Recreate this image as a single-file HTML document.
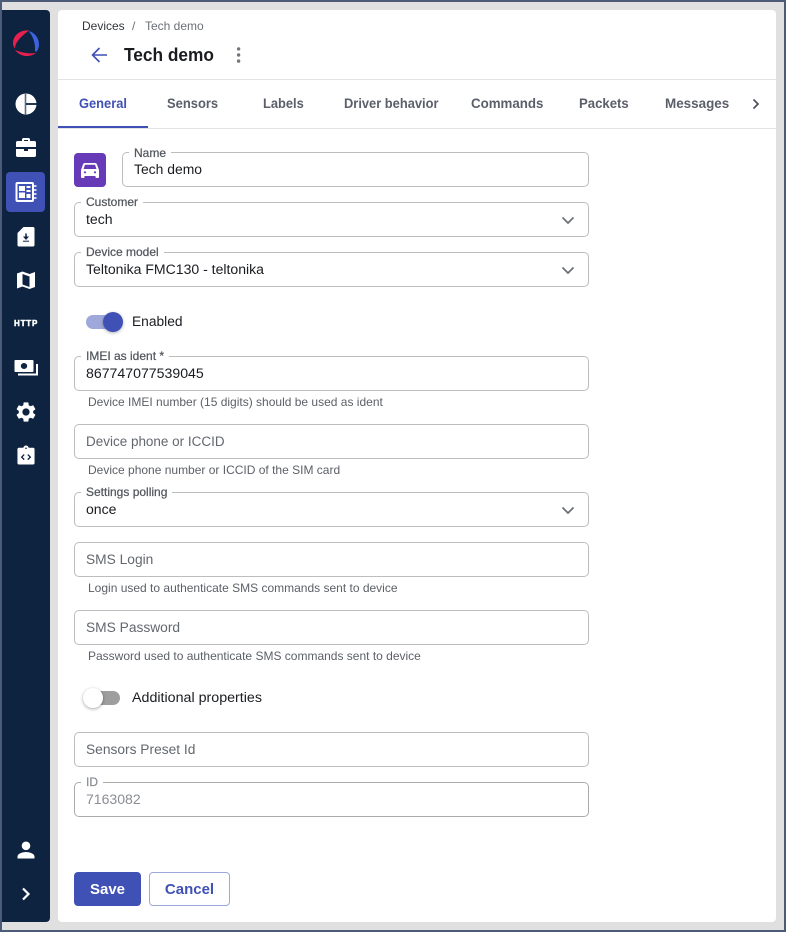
<!DOCTYPE html>
<html><head><meta charset="utf-8"><style>
*{box-sizing:border-box}
html,body{margin:0;padding:0}
body{width:786px;height:932px;position:relative;overflow:hidden;background:#e0e0e0;font-family:"Liberation Sans",sans-serif;color:#1a1c20}
#frame{position:absolute;left:0;top:0;width:786px;height:932px;border:2px solid #4b5b78;z-index:9;pointer-events:none}
#side{position:absolute;left:2px;top:10px;width:48px;height:912px;background:#0e2340;border-radius:0 4px 4px 0}
#main{position:absolute;left:58px;top:10px;width:718px;height:912px;background:#fff;border-radius:4px}
.a{position:absolute;white-space:nowrap}
.f{position:absolute;left:74px;width:515px;height:35px;border:1px solid #bdbdbd;border-radius:5px;background:#fff}
.l{position:absolute;font-size:12px;line-height:14px;color:#54585f;background:#fff;padding:0 5px;left:81px;white-space:nowrap;transform-origin:left;transform:scaleX(1);-webkit-text-stroke:.25px #54585f}
.v{position:absolute;left:86px;font-size:14.2px;line-height:18px;color:#1a1c20;white-space:nowrap;transform-origin:left;transform:scaleX(.99);margin-top:1px}
.p{color:#63676e;transform:scaleX(.97)}
.h{position:absolute;left:88px;font-size:12px;line-height:14px;color:#5c6067;white-space:nowrap}
.t{position:absolute;top:95px;font-size:14px;line-height:16px;font-weight:bold;color:#5b5f69;white-space:nowrap;transform-origin:left}
svg{position:absolute;overflow:visible}
</style></head><body>
<div id="side"></div><div id="main"></div>

<svg style="left:12px;top:29px" width="28" height="28" viewBox="0 0 28 28"><path d="M17 1.500C9 .5 1 6 1 14C1 16 1.500 18 3 19.500C3 14 8 8 17 1.500z" fill="#e8204f"/><path d="M3 21C6 25 11 27.500 16 27C19 26.800 22 25.500 24 24C18 25 10 24 3 21z" fill="#e8204f"/><path d="M16.500 2C22 3 27 9 27 15C27 18 26 21 24.500 22.500C24 23 23 22.500 23 21.500C23.500 14 21 7 16.500 2z" fill="#3d63e0"/></svg>

<svg style="left:15px;top:93px" width="22" height="22" viewBox="0 0 22 22"><circle cx="11" cy="11" r="10.500" fill="#fff"/><path d="M10.500 0v22" stroke="#5d6c84" stroke-width="1.600"/><path d="M11 11h11" stroke="#0e2340" stroke-width="1.800"/></svg>
<svg style="left:15px;top:137px" width="22" height="22" viewBox="0 0 22 22"><path d="M7 4V2.500C7 1.700 7.700 1 8.500 1h5c.8 0 1.500.7 1.500 1.500V4h4.500c.8 0 1.500.7 1.500 1.500V10H1V5.500C1 4.700 1.700 4 2.500 4zM9 4h4V3H9zM1 12h8v2h4v-2h8v6.500c0 .8-.7 1.500-1.500 1.500h-17C1.700 20 1 19.300 1 18.500z" fill="#fff"/></svg>
<div class="a" style="left:6px;top:172px;width:39px;height:40px;background:#3f51b5;border-radius:4px"></div>
<svg style="left:15px;top:182px" width="22" height="20" viewBox="0 0 22 20"><path d="M2.500 1h14.500c.8 0 1 .5 1 1v16c0 .5-.2 1-1 1H2.500c-.8 0-1-.5-1-1V2c0-.5.2-1 1-1z" fill="none" stroke="#fff" stroke-width="2"/><path d="M4 4h6v5H4zM4 10.500h6V16H4zM11.500 4h4v2h-4zM11.500 8h4v2h-4zM11.500 12h4v4h-4z" fill="#fff"/><path d="M19 4h2.500M19 8h2.500M19 12h2.500M19 16h2.500" stroke="#fff" stroke-width="1.500"/></svg>
<svg style="left:17px;top:226px" width="18" height="21" viewBox="0 0 18 21"><path d="M6.500 1h9.500c.9 0 1.500.6 1.500 1.500V19c0 .9-.6 1.500-1.500 1.500H2C1.100 20.500.5 19.900.5 19V7z" fill="#fff"/><path d="M9 7.500v4" stroke="#0e2340" stroke-width="1.500"/><path d="M6 10.500h6L9 14z" fill="#0e2340"/><path d="M6 15.200h6" stroke="#0e2340" stroke-width="1"/></svg>
<svg style="left:16px;top:270px" width="20" height="20" viewBox="0 0 20 20"><path d="M1 3.500 6.500 1.500 13.500 4 19 2v15l-5.500 2-7-2.500L1 18.500zM6.500 4v10.500l7 2.500V6.500z" fill="#fff" fill-rule="evenodd"/></svg>
<div class="a" style="left:14px;top:319px;width:26px;font-size:8px;line-height:10px;font-weight:bold;color:#fff;letter-spacing:.8px;-webkit-text-stroke:.5px #fff">HTTP</div>
<svg style="left:14px;top:359px" width="25" height="18" viewBox="0 0 25 18"><path d="M1.500 1h17c.6 0 1 .4 1 1v10c0 .6-.4 1-1 1h-17c-.6 0-1-.4-1-1V2c0-.6.4-1 1-1z" fill="#fff"/><ellipse cx="10" cy="7" rx="3.200" ry="3" fill="#0e2340"/><path d="M23 5v10.500H4" fill="none" stroke="#fff" stroke-width="2"/></svg>
<svg style="left:14px;top:400px" width="24" height="24" viewBox="0 0 24 24"><path d="M19.140 12.940c.04-.3.060-.61.060-.94 0-.32-.020-.64-.070-.94l2.030-1.580c.18-.14.230-.41.120-.61l-1.920-3.320c-.12-.22-.37-.29-.59-.22l-2.390.96c-.5-.38-1.030-.7-1.620-.94l-.36-2.540c-.04-.24-.24-.41-.48-.41h-3.840c-.24 0-.43.17-.47.41l-.36 2.540c-.59.24-1.130.57-1.620.94l-2.390-.96c-.22-.08-.47 0-.59.22L2.740 8.870c-.12.21-.08.47.120.61l2.030 1.580c-.05.3-.09.63-.09.94s.020.64.070.94l-2.030 1.580c-.18.14-.23.41-.12.61l1.920 3.320c.12.22.37.29.59.22l2.390-.96c.5.38 1.030.7 1.620.94l.36 2.540c.05.24.24.41.48.41h3.840c.24 0 .44-.17.47-.41l.36-2.540c.59-.24 1.130-.56 1.620-.94l2.390.96c.22.08.47 0 .59-.22l1.920-3.320c.12-.22.070-.47-.12-.61l-2.010-1.580zM12 15.600c-1.980 0-3.600-1.620-3.600-3.600s1.620-3.600 3.600-3.600 3.600 1.620 3.600 3.600-1.620 3.600-3.600 3.600z" fill="#fff"/></svg>
<svg style="left:17px;top:445px" width="18" height="20" viewBox="0 0 20 22"><path d="M2 3h5c.4-1.500 1.500-2.500 3-2.500S12.600 1.500 13 3h5c.8 0 1.500.7 1.500 1.500v15.500c0 .8-.7 1.500-1.500 1.500H2c-.8 0-1.500-.7-1.500-1.500V4.500C.5 3.700 1.200 3 2 3z" fill="#fff"/><path d="M8 10.500l-2.800 2.800L8 16.100M12 10.500l2.800 2.800-2.800 2.800" fill="none" stroke="#0e2340" stroke-width="1.500"/><circle cx="10" cy="3.500" r=".9" fill="#0e2340"/></svg>
<svg style="left:17px;top:841px" width="18" height="18" viewBox="0 0 18 18"><circle cx="9" cy="4.800" r="4.300" fill="#fff"/><path d="M.5 17.500v-2c0-3 5.500-4.500 8.500-4.500s8.500 1.500 8.500 4.500v2z" fill="#fff"/></svg>
<svg style="left:20.500px;top:887px" width="11" height="14" viewBox="0 0 11 14"><path d="M2 1.500 7.500 7 2 12.500" fill="none" stroke="#fff" stroke-width="2.200"/></svg>

<div class="a" style="left:82px;top:19px;font-size:12px;line-height:14px;color:#33363c">Devices</div>
<div class="a" style="left:132px;top:19px;font-size:12px;line-height:14px;color:#6c7077">/</div>
<div class="a" style="left:145px;top:19px;font-size:12px;line-height:14px;color:#6c7077">Tech demo</div>
<svg style="left:90px;top:46px" width="18" height="18" viewBox="0 0 18 18"><path d="M17 9H3M9.500 2 2.500 9l7 7" fill="none" stroke="#3f51b5" stroke-width="1.600"/></svg>
<div class="a" style="left:124px;top:44px;font-size:18px;line-height:22px;font-weight:bold;color:#1a1c20;transform:scaleX(.96);transform-origin:left">Tech demo</div>
<svg style="left:234px;top:46px" width="8" height="18" viewBox="0 0 8 18"><circle cx="4.600" cy="2.900" r="1.700" fill="#71757c"/><circle cx="4.600" cy="9" r="1.700" fill="#71757c"/><circle cx="4.600" cy="15.100" r="1.700" fill="#71757c"/></svg>
<div class="a" style="left:58px;top:79px;width:718px;height:1px;background:#e3e3e3"></div>
<div class="a" style="left:58px;top:128px;width:718px;height:1px;background:#e3e3e3"></div>
<div class="a" style="left:58px;top:126px;width:90px;height:2px;background:#3f51b5"></div>

<div class="t" style="left:79px;color:#3f51b5;transform:scaleX(.92)">General</div>
<div class="t" style="left:167px;transform:scaleX(.925)">Sensors</div>
<div class="t" style="left:263px;transform:scaleX(.92)">Labels</div>
<div class="t" style="left:344px;transform:scaleX(.92)">Driver behavior</div>
<div class="t" style="left:471px;transform:scaleX(.95)">Commands</div>
<div class="t" style="left:579px;transform:scaleX(.94)">Packets</div>
<div class="t" style="left:665px;transform:scaleX(.96)">Messages</div>
<svg style="left:752px;top:98px" width="8" height="12" viewBox="0 0 8 12"><path d="M1.500 1.500 6 6 1.500 10.500" fill="none" stroke="#4c5058" stroke-width="1.700"/></svg>

<div class="a" style="left:74px;top:153px;width:32px;height:34px;background:#673ab7;border-radius:4px"></div>
<svg style="left:80px;top:161px" width="20" height="18" viewBox="0 0 20 18"><path d="M5 2h10c1 0 1.700.6 2 1.400L19 9V16c0 .6-.4 1-1 1h-1.500c-.6 0-1-.4-1-1v-1h-11v1c0 .6-.4 1-1 1H2c-.6 0-1-.4-1-1V9l2-5.600C3.300 2.600 4 2 5 2zM3.500 8h13L15 3.800H5z" fill="#fff" fill-rule="evenodd"/><circle cx="5" cy="11.300" r="1.100" fill="#673ab7"/><circle cx="15" cy="11.300" r="1.100" fill="#673ab7"/></svg>

<div class="f" style="left:122px;top:152px;width:467px"></div>
<div class="l" style="left:129px;top:146px">Name</div>
<div class="v" style="left:134px;top:160px;transform:scaleX(.98)">Tech demo</div>

<div class="f" style="top:202px"></div>
<div class="l" style="top:195px">Customer</div>
<div class="v" style="top:210px">tech</div>
<svg style="left:561px;top:216px" width="14" height="9" viewBox="0 0 14 9"><path d="M1.500 1.500 7 7l5.500-5.500" fill="none" stroke="#6b6f76" stroke-width="1.700"/></svg>

<div class="f" style="top:252px"></div>
<div class="l" style="top:245px">Device model</div>
<div class="v" style="top:260px">Teltonika FMC130 - teltonika</div>
<svg style="left:561px;top:266px" width="14" height="9" viewBox="0 0 14 9"><path d="M1.500 1.500 7 7l5.500-5.500" fill="none" stroke="#6b6f76" stroke-width="1.700"/></svg>

<div class="a" style="left:86px;top:315px;width:34px;height:14px;border-radius:7px;background:#9fa8da"></div>
<div class="a" style="left:103px;top:312px;width:20px;height:20px;border-radius:50%;background:#3f51b5;box-shadow:0 1px 3px rgba(0,0,0,.3)"></div>
<div class="v" style="left:132px;top:312px;transform:scaleX(.97)">Enabled</div>

<div class="f" style="top:356px"></div>
<div class="l" style="top:349px">IMEI as ident *</div>
<div class="v" style="top:364px;transform:scaleX(.995)">867747077539045</div>
<div class="h" style="top:395px">Device IMEI number (15 digits) should be used as ident</div>

<div class="f" style="top:424px"></div>
<div class="v p" style="top:432px;transform:scaleX(.95)">Device phone or ICCID</div>
<div class="h" style="top:463px">Device phone number or ICCID of the SIM card</div>

<div class="f" style="top:492px"></div>
<div class="l" style="top:485px">Settings polling</div>
<div class="v" style="top:500px">once</div>
<svg style="left:561px;top:506px" width="14" height="9" viewBox="0 0 14 9"><path d="M1.500 1.500 7 7l5.500-5.500" fill="none" stroke="#6b6f76" stroke-width="1.700"/></svg>

<div class="f" style="top:542px"></div>
<div class="v p" style="top:550px">SMS Login</div>
<div class="h" style="top:581px">Login used to authenticate SMS commands sent to device</div>

<div class="f" style="top:610px"></div>
<div class="v p" style="top:618px">SMS Password</div>
<div class="h" style="top:649px">Password used to authenticate SMS commands sent to device</div>

<div class="a" style="left:86px;top:691px;width:34px;height:14px;border-radius:7px;background:#9e9e9e"></div>
<div class="a" style="left:83px;top:688px;width:20px;height:20px;border-radius:50%;background:#fff;box-shadow:0 1px 3px rgba(0,0,0,.35)"></div>
<div class="v" style="left:132px;top:688px;transform:scaleX(1.005)">Additional properties</div>

<div class="f" style="top:732px"></div>
<div class="v p" style="top:740px">Sensors Preset Id</div>

<div class="f" style="top:782px;border-color:#aaa"></div>
<div class="l" style="top:775px;color:#8a8d93;-webkit-text-stroke:.25px #8a8d93">ID</div>
<div class="v" style="top:790px;color:#8a8d93">7163082</div>

<div class="a" style="left:74px;top:872px;width:67px;height:34px;background:#3f51b5;border-radius:4px;color:#fff;font-size:15px;line-height:35px;font-weight:bold;text-align:center">Save</div>
<div class="a" style="left:149px;top:872px;width:81px;height:34px;background:#fff;border:1px solid #9fa8da;border-radius:4px;color:#3f51b5;font-size:15px;line-height:33px;font-weight:bold;text-align:center">Cancel</div>

<div id="frame"></div>
</body></html>
